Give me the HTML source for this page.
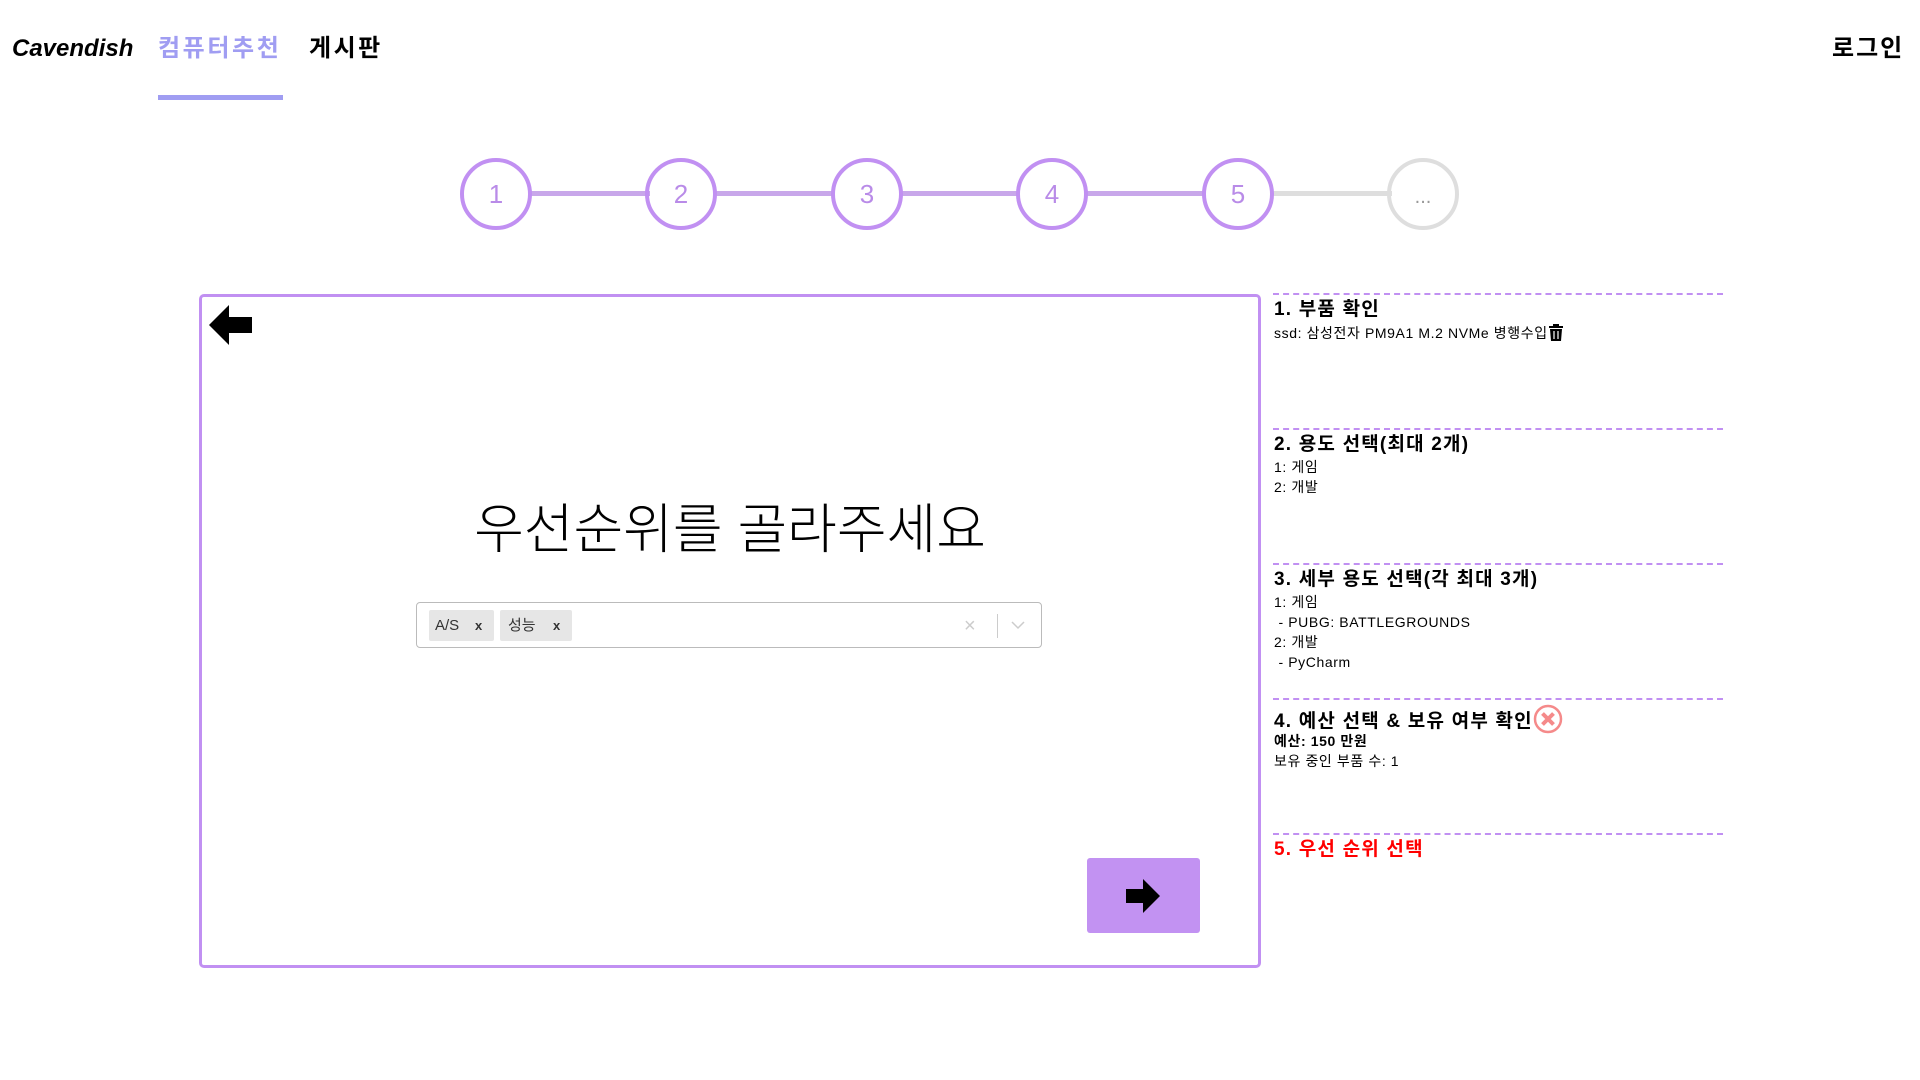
<!DOCTYPE html>
<html><head><meta charset="utf-8"><style>
body{margin:0;width:1920px;height:1080px;background:#fff;font-family:"Liberation Sans","Noto Sans CJK KR",sans-serif;position:relative;overflow:hidden;color:#000}
.a{position:absolute}
.nav{font-size:24px;font-weight:bold;top:32px;line-height:34px}
.circ{position:absolute;top:158px;width:64px;height:64px;border:4px solid #c190f2;border-radius:50%;box-sizing:content-box;text-align:center;line-height:64px;font-size:26px;color:#b98be8}
.line{position:absolute;top:191px;height:5px;background:#c8a7ea}
.dash{position:absolute;left:1273px;width:450px;border-top:2px dashed #c190f2}
.st{position:absolute;left:1274px;font-size:19px;font-weight:bold;line-height:24px;letter-spacing:1.2px}
.sm{position:absolute;left:1274px;font-size:14px;line-height:20px;letter-spacing:0.6px}
</style></head><body>
<div class="a nav" style="left:12px;font-style:italic">Cavendish</div>
<div class="a nav" style="left:158px;color:#a09df2;letter-spacing:2.6px">컴퓨터추천</div>
<div class="a nav" style="left:309px;letter-spacing:2.5px">게시판</div>
<div class="a nav" style="left:1832px;letter-spacing:2px">로그인</div>
<div class="a" style="left:158px;top:95px;width:125px;height:5px;background:#a09df2"></div>

<div class="line" style="left:530px;width:120px"></div>
<div class="line" style="left:715px;width:120px"></div>
<div class="line" style="left:900px;width:120px"></div>
<div class="line" style="left:1086px;width:120px"></div>
<div class="line" style="left:1272px;width:120px;background:#dedede"></div>
<div class="circ" style="left:460px">1</div>
<div class="circ" style="left:645px">2</div>
<div class="circ" style="left:831px">3</div>
<div class="circ" style="left:1016px">4</div>
<div class="circ" style="left:1202px">5</div>
<div class="circ" style="left:1387px;border-color:#dedede;color:#999;font-size:20px;line-height:70px">...</div>

<div class="a" style="left:199px;top:294px;width:1056px;height:668px;border:3px solid #c190f2;border-radius:5px"></div>
<svg class="a" style="left:209px;top:305px" width="44" height="40" viewBox="0 0 44 40"><path d="M0 20 L20 0 L20 12 L43 12 L43 28 L20 28 L20 40 Z"/></svg>
<div class="a" style="left:200px;width:1060px;top:494px;text-align:center;font-size:54px;line-height:72px;font-weight:300">우선순위를 골라주세요</div>
<div class="a" style="left:416px;top:602px;width:624px;height:44px;border:1px solid #bbb;border-radius:4px"></div>
<div class="a" style="left:429px;top:610px;width:65px;height:31px;background:#e6e6e6;border-radius:2px;font-size:15px;line-height:31px;color:#333"><span style="margin-left:6px">A/S</span><span style="position:absolute;left:46px;font-weight:bold;font-size:13px">x</span></div>
<div class="a" style="left:500px;top:610px;width:72px;height:31px;background:#e6e6e6;border-radius:2px;font-size:15px;line-height:31px;color:#333"><span style="margin-left:8px">성능</span><span style="position:absolute;left:53px;font-weight:bold;font-size:13px">x</span></div>
<div class="a" style="left:964px;top:612px;font-size:20px;color:#ccc;line-height:28px">×</div>
<div class="a" style="left:997px;top:614px;width:1px;height:24px;background:#ccc"></div>
<svg class="a" style="left:1011px;top:620px" width="14" height="10"><path d="M1 2 L7 8 L13 2" stroke="#ccc" stroke-width="1.5" fill="none"/></svg>
<div class="a" style="left:1087px;top:858px;width:113px;height:75px;background:#c292f2;border-radius:3px"></div>
<svg class="a" style="left:1126px;top:879px" width="35" height="34" viewBox="0 0 35 34"><path d="M0 10 L17 10 L17 0 L34 17 L17 34 L17 24 L0 24 Z"/></svg>

<div class="dash" style="top:293px"></div>
<div class="dash" style="top:428px"></div>
<div class="dash" style="top:563px"></div>
<div class="dash" style="top:698px"></div>
<div class="dash" style="top:833px"></div>
<div class="st" style="top:298px">1. 부품 확인</div>
<div class="sm" style="top:323px">ssd: 삼성전자 PM9A1 M.2 NVMe 병행수입<svg width="16" height="18" viewBox="0 0 16 18" style="vertical-align:-3px"><path d="M1 3 H15 V5 H1Z M5 1 H11 V3 H5Z M2 6 H14 L13 18 H3Z"/><path d="M6 8 V16 M10 8 V16" stroke="#fff" stroke-width="1.2"/></svg></div>
<div class="st" style="top:433px">2. 용도 선택(최대 2개)</div>
<div class="sm" style="top:457px">1: 게임<br>2: 개발</div>
<div class="st" style="top:568px">3. 세부 용도 선택(각 최대 3개)</div>
<div class="sm" style="top:592px">1: 게임<br>&nbsp;- PUBG: BATTLEGROUNDS<br>2: 개발<br>&nbsp;- PyCharm</div>
<div class="st" style="top:704px">4. 예산 선택 &amp; 보유 여부 확인<svg width="30" height="30" viewBox="0 0 30 30" style="vertical-align:-7px"><circle cx="15" cy="15" r="13" fill="none" stroke="#f58a8a" stroke-width="2.5"/><path d="M9.5 9.5 L20.5 20.5 M20.5 9.5 L9.5 20.5" stroke="#f58a8a" stroke-width="4"/></svg></div>
<div class="sm" style="top:731px;font-weight:bold">예산: 150 만원</div>
<div class="sm" style="top:751px">보유 중인 부품 수: 1</div>
<div class="st" style="top:838px;color:#f00">5. 우선 순위 선택</div>
</body></html>
